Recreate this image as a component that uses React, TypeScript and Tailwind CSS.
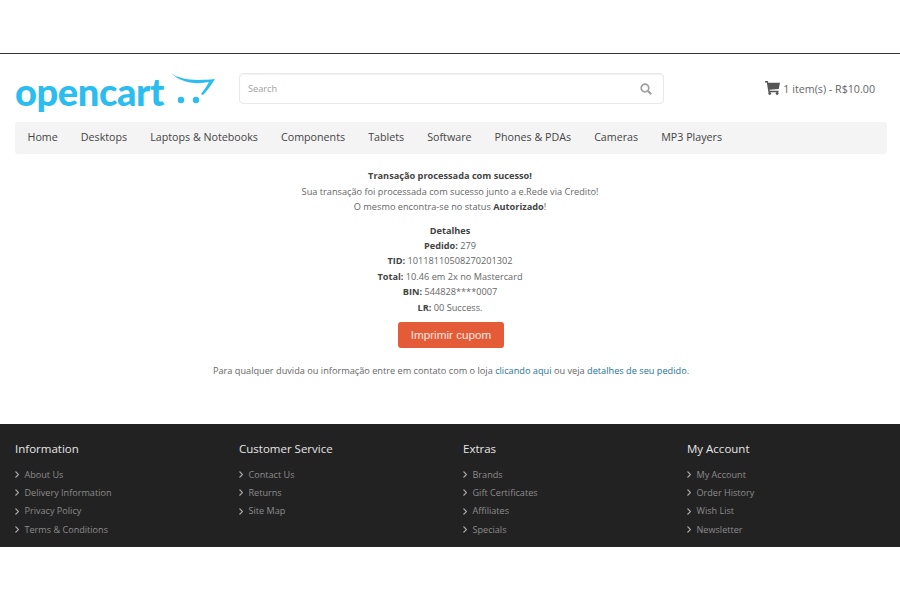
import React from "react";

const menu = [
    "Home",
    "Desktops",
    "Laptops & Notebooks",
    "Components",
    "Tablets",
    "Software",
    "Phones & PDAs",
    "Cameras",
    "MP3 Players",
];

const footer = [
    {
        title: "Information",
        links: ["About Us", "Delivery Information", "Privacy Policy", "Terms & Conditions"],
    },
    { title: "Customer Service", links: ["Contact Us", "Returns", "Site Map"] },
    { title: "Extras", links: ["Brands", "Gift Certificates", "Affiliates", "Specials"] },
    { title: "My Account", links: ["My Account", "Order History", "Wish List", "Newsletter"] },
];

function Logo() {
    return (
        <div className="flex items-start w-[224px] h-[40px]">
            <span className="font-['Lato',sans-serif] font-black text-[38px] leading-[36px] tracking-[-0.4px] text-[#2bbcf0] w-[155px] shrink-0">
                opencart
            </span>
            <svg width="46" height="36" viewBox="0 0 46 36" className="mt-[-1px] shrink-0">
                <path d="M1 1 C10 8 24 9 45 7 C40 15 37 19 33 23 L31 22 C34 18 37 14 39 10 C24 13 10 10 1 1 Z" fill="#2bbcf0" />
                <circle cx="11" cy="28" r="3.2" fill="#2bbcf0" />
                <circle cx="26" cy="28" r="3.2" fill="#2bbcf0" />
            </svg>
        </div>
    );
}

export default function App() {
    return (
        <div className="w-[900px] h-[600px] bg-white font-['Open_Sans',sans-serif] text-[9.2px] text-[#666] overflow-hidden">
            <div className="h-[54px] border-b border-[#333]" />

            <div className="w-[872px] ml-[15px] pt-[19px]">
                <div className="flex items-start h-[49px]">
                    <Logo />
                    <div className="w-[425px] h-[31px] border border-[#e8e8e8] rounded-[4px] flex items-center justify-between pl-[8px] pr-[11px] shadow-[inset_0_1px_1px_rgba(0,0,0,0.05)]">
                        <span className="text-[#a0a0a0]">Search</span>
                        <svg width="12" height="12" viewBox="0 0 12 12" fill="none" stroke="#a0a0a0" strokeWidth="1.7">
                            <circle cx="5" cy="5" r="3.8" />
                            <path d="M8 8 L11.2 11.2" strokeWidth="2.2" />
                        </svg>
                    </div>
                    <div className="ml-auto mr-[12px] mt-[8px] flex items-center gap-[3px] text-[10.7px] text-[#666]">
                        <svg width="15" height="14" viewBox="0 0 16 15" fill="#555" className="mb-[3px]">
                            <path d="M0 0 H3 L3.5 2 H16 L14.7 8.5 L4.8 9.4 L5 10.5 H14.5 V12 H3.6 L1.9 1.5 H0 Z" />
                            <circle cx="5" cy="13.4" r="1.5" />
                            <circle cx="13" cy="13.4" r="1.5" />
                        </svg>
                        <span>1 item(s) - R$10.00</span>
                    </div>
                </div>

                <nav className="h-[32px] bg-[#f4f4f4] rounded-[3px] flex items-center pl-[12.5px] pb-[1px] gap-[23.1px] text-[10.7px] text-[#444]">
                    {menu.map((item) => (
                        <span key={item}>{item}</span>
                    ))}
                </nav>
            </div>

            <div className="flex flex-col items-center pt-[14.4px] leading-[15.4px] h-[270px]">
                <p className="font-bold text-[#444]">Transação processada com sucesso!</p>
                <p>Sua transação foi processada com sucesso junto a e.Rede via Credito!</p>
                <p>
                    O mesmo encontra-se no status <b className="text-[#444]">Autorizado</b>!
                </p>
                <p className="font-bold text-[#444] mt-[8px]">Detalhes</p>
                <p>
                    <b className="text-[#444]">Pedido:</b> 279
                </p>
                <p>
                    <b className="text-[#444]">TID:</b> 10118110508270201302
                </p>
                <p>
                    <b className="text-[#444]">Total:</b> 10.46 em 2x no Mastercard
                </p>
                <p>
                    <b className="text-[#444]">BIN:</b> 544828****0007
                </p>
                <p>
                    <b className="text-[#444]">LR:</b> 00 Success.
                </p>
                <button className="mt-[7px] ml-[2px] w-[106px] h-[26px] bg-[#e45c37] rounded-[3px] text-[#f6e6e0] text-[11.7px] font-['Liberation_Sans',sans-serif]">
                    Imprimir cupom
                </button>
                <p className="mt-[15px] ml-[2px]">
                    Para qualquer duvida ou informação entre em contato com o loja{" "}
                    <span className="text-[#23749b]">clicando aqui</span> ou veja{" "}
                    <span className="text-[#23749b]">detalhes de seu pedido</span>.
                </p>
            </div>

            <footer className="h-[123px] bg-[#222] pl-[15px] pt-[17px] grid grid-cols-[224px_224px_224px_224px]">
                {footer.map((col) => (
                    <div key={col.title}>
                        <h5 className="text-[11.5px] leading-[16.6px] text-[#e6e6e6] mb-[8px]">{col.title}</h5>
                        <ul className="flex flex-col">
                            {col.links.map((link) => (
                                <li key={link} className="h-[18.25px] flex items-center gap-[5.5px] text-[#8c8c8c] text-[9.1px]">
                                    <svg width="4" height="7" viewBox="0 0 4 7" fill="none" stroke="#aaa" strokeWidth="1.1">
                                        <path d="M0.5 0.5 L3.5 3.5 L0.5 6.5" />
                                    </svg>
                                    {link}
                                </li>
                            ))}
                        </ul>
                    </div>
                ))}
            </footer>
        </div>
    );
}
